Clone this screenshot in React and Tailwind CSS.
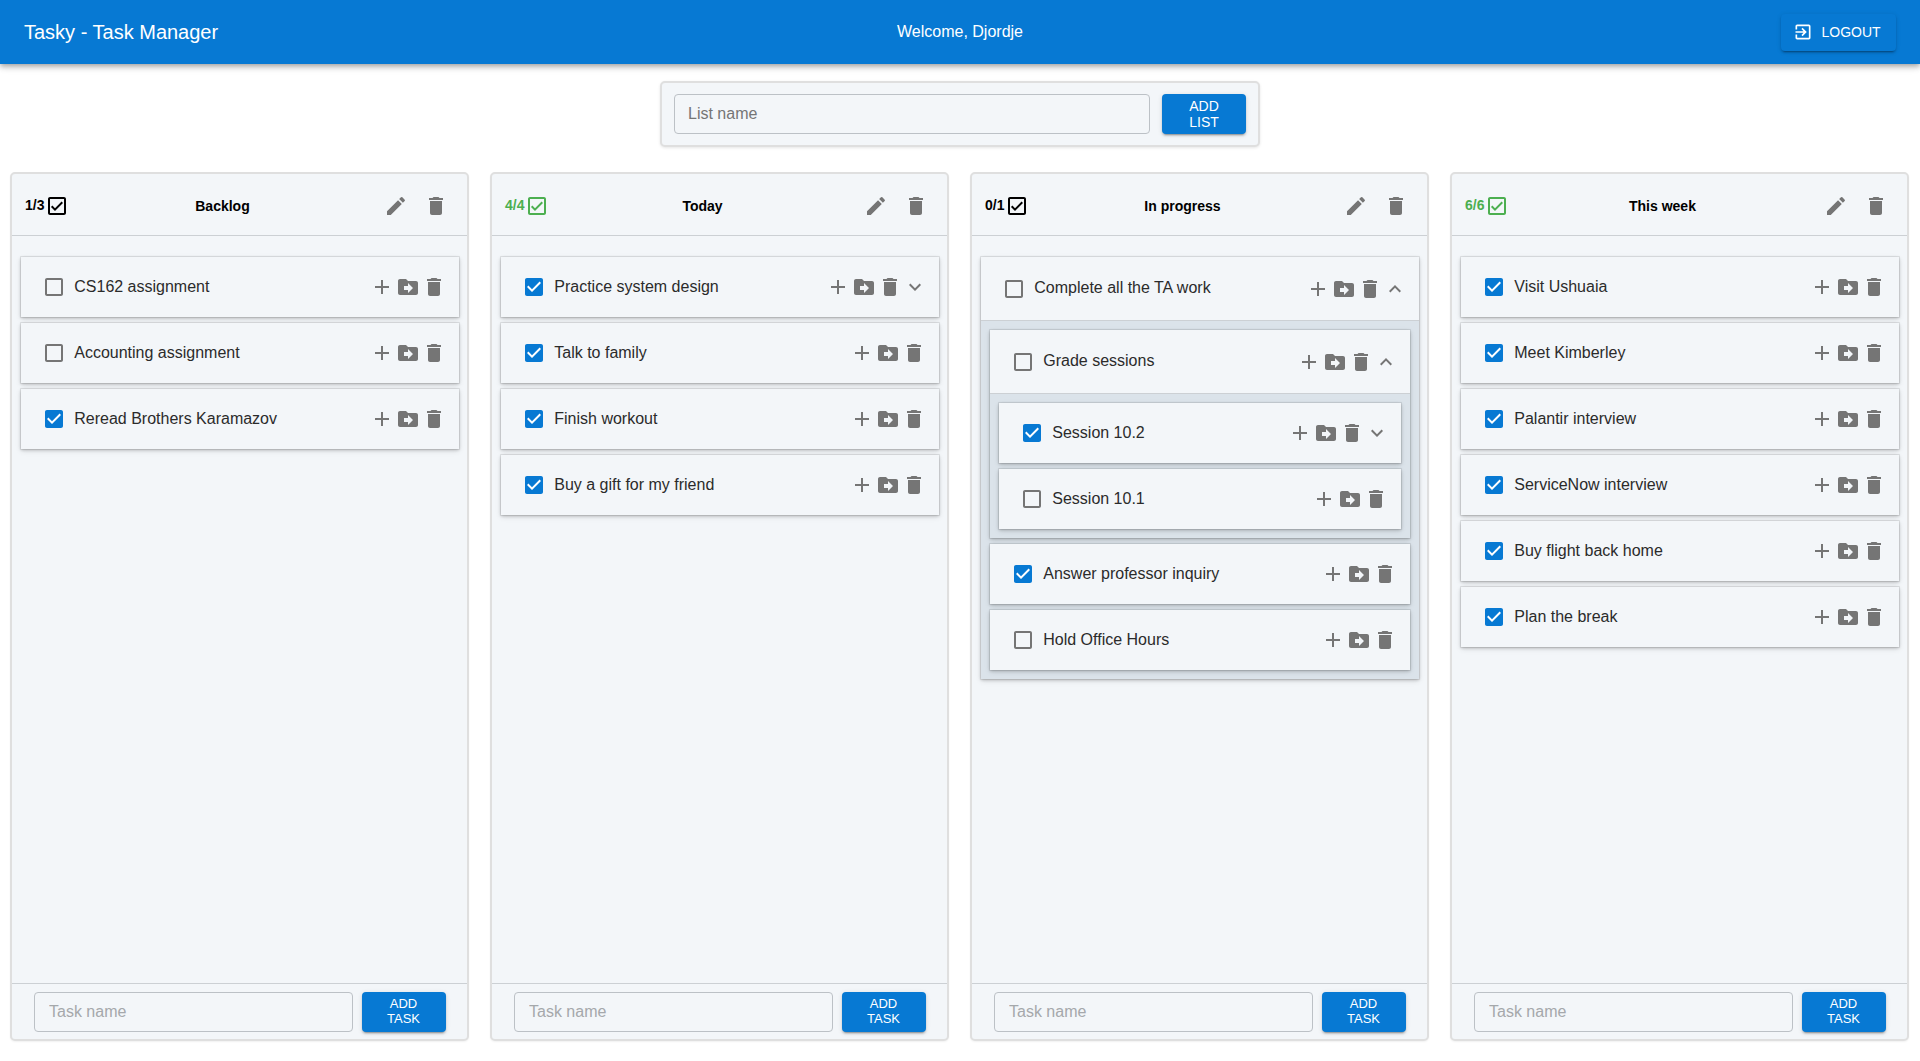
import React from "react";

const PATHS = {
  edit: "M3 17.25V21h3.75L17.81 9.94l-3.75-3.75L3 17.25zM20.71 7.04c.39-.39.39-1.02 0-1.41l-2.34-2.34a.9959.9959 0 0 0-1.41 0l-1.83 1.83 3.75 3.75 1.83-1.83z",
  trash: "M6 19c0 1.1.9 2 2 2h8c1.1 0 2-.9 2-2V7H6v12zM19 4h-3.5l-1-1h-5l-1 1H5v2h14V4z",
  add: "M19 13h-6v6h-2v-6H5v-2h6V5h2v6h6v2z",
  move: "M20 6h-8l-2-2H4c-1.1 0-1.99.9-1.99 2L2 18c0 1.1.9 2 2 2h16c1.1 0 2-.9 2-2V8c0-1.1-.9-2-2-2zm-8 12v-3H8v-4h4V8l5 5-5 5z",
  down: "M16.59 8.59 12 13.17 7.41 8.59 6 10l6 6 6-6z",
  up: "m12 8-6 6 1.41 1.41L12 10.83l4.59 4.58L18 14z",
  blank: "M19 5v14H5V5h14m0-2H5c-1.1 0-2 .9-2 2v14c0 1.1.9 2 2 2h14c1.1 0 2-.9 2-2V5c0-1.1-.9-2-2-2z",
  checked: "M19 3H5c-1.11 0-2 .9-2 2v14c0 1.1.89 2 2 2h14c1.11 0 2-.9 2-2V5c0-1.1-.89-2-2-2zm-9 14-5-5 1.41-1.41L10 14.17l7.59-7.59L19 8l-9 9z",
  outlined: "M19 3H5c-1.1 0-2 .9-2 2v14c0 1.1.9 2 2 2h14c1.1 0 2-.9 2-2V5c0-1.1-.9-2-2-2zm0 16H5V5h14v14zM17.99 9l-1.41-1.42-6.59 6.59-2.58-2.57-1.42 1.41 4 3.99z",
  logout: "M10.09 15.59 11.5 17l5-5-5-5-1.41 1.41L12.67 11H3v2h9.67l-2.58 2.59zM19 3H5c-1.11 0-2 .9-2 2v4h2V5h14v14H5v-4H3v4c0 1.1.89 2 2 2h14c1.1 0 2-.9 2-2V5c0-1.1-.9-2-2-2z",
};

const Icon = ({ name, className = "w-6 h-6 text-[#757575]" }) => (
  <svg viewBox="0 0 24 24" fill="currentColor" className={`shrink-0 ${className}`}>
    <path d={PATHS[name]} />
  </svg>
);

const LISTS = [
  {
    title: "Backlog",
    count: "1/3",
    tasks: [
      { name: "CS162 assignment" },
      { name: "Accounting assignment" },
      { name: "Reread Brothers Karamazov", done: true },
    ],
  },
  {
    title: "Today",
    count: "4/4",
    complete: true,
    tasks: [
      { name: "Practice system design", done: true, chevron: "down" },
      { name: "Talk to family", done: true },
      { name: "Finish workout", done: true },
      { name: "Buy a gift for my friend", done: true },
    ],
  },
  {
    title: "In progress",
    count: "0/1",
    tasks: [
      {
        name: "Complete all the TA work",
        chevron: "up",
        children: [
          {
            name: "Grade sessions",
            chevron: "up",
            children: [
              { name: "Session 10.2", done: true, chevron: "down" },
              { name: "Session 10.1" },
            ],
          },
          { name: "Answer professor inquiry", done: true },
          { name: "Hold Office Hours" },
        ],
      },
    ],
  },
  {
    title: "This week",
    count: "6/6",
    complete: true,
    tasks: [
      { name: "Visit Ushuaia", done: true },
      { name: "Meet Kimberley", done: true },
      { name: "Palantir interview", done: true },
      { name: "ServiceNow interview", done: true },
      { name: "Buy flight back home", done: true },
      { name: "Plan the break", done: true },
    ],
  },
];

const Task = ({ task }) => {
  const open = !!task.children;
  return (
    <div className="bg-[#f3f6f9] shadow-[0_0_0_1px_rgba(0,0,0,0.07),0_1px_3px_rgba(0,0,0,0.22),0_2px_6px_rgba(0,0,0,0.1)]">
      <div className={`flex items-center pl-[21px] pr-[13px] ${open ? "h-[64px] border-b border-[#ccd0d4]" : "h-[60px]"}`}>
        {task.done ? (
          <span className="relative w-6 h-6 shrink-0">
            <span className="absolute left-[6px] top-[6px] w-3 h-3 bg-white" />
            <Icon name="checked" className="relative w-6 h-6 text-[#0779d3]" />
          </span>
        ) : (
          <Icon name="blank" />
        )}
        <span className="ml-[8.5px] flex-1 text-[16px] text-[#2b2b2b] mb-px">
          {task.name}
        </span>
        <div className="flex items-center gap-[2px]">
          <Icon name="add" />
          <Icon name="move" />
          <Icon name="trash" />
        </div>
        {task.chevron && (
          <span className="ml-px -mr-px">
            <Icon name={task.chevron} />
          </span>
        )}
      </div>
      {open && (
        <div className="flex flex-col gap-[6px] p-[9px] bg-[#dbe3ea]">
          {task.children.map((child) => (
            <Task key={child.name} task={child} />
          ))}
        </div>
      )}
    </div>
  );
};

const AddButton = ({ top, bottom, className }) => (
  <button className={`w-[84px] h-10 shrink-0 flex flex-col items-center justify-center bg-[#0779d3] text-white rounded-[4px] shadow-[0_3px_1px_-2px_rgba(0,0,0,0.2),0_2px_2px_0_rgba(0,0,0,0.14),0_1px_5px_0_rgba(0,0,0,0.12)] ${className}`}>
    <span>{top}</span>
    <span>{bottom}</span>
  </button>
);

const List = ({ list }) => (
  <div className="flex flex-col min-w-0 bg-[#f3f6f9] border-2 border-[#dfdfdf] rounded-[5px] shadow-[0_1px_2px_rgba(0,0,0,0.06)]">
    <div className="h-[61.5px] pt-[3px] flex items-center pl-[13px] pr-[11.5px] border-b border-[#ccd0d4]">
      <div className={`flex items-center text-[14px] font-bold ${list.complete ? "text-[#4caf50]" : "text-black"}`}>
        <span className="mr-px">{list.count}</span>
        <Icon name="outlined" className={`w-6 h-6 ${list.complete ? "text-[#4caf50]" : "text-black"}`} />
      </div>
      <div className="flex-1 pt-px text-center text-[14px] font-bold text-black">{list.title}</div>
      <div className="flex items-center">
        <span className="w-10 h-10 flex items-center justify-center"><Icon name="edit" /></span>
        <span className="w-10 h-10 flex items-center justify-center"><Icon name="trash" /></span>
      </div>
    </div>
    <div className="flex-1 flex flex-col gap-[6px] pl-[8.75px] pr-[8.5px] pt-[21.5px]">
      {list.tasks.map((task) => (
        <Task key={task.name} task={task} />
      ))}
    </div>
    <div className="h-[56.5px] flex items-start gap-[9px] pl-[22px] pr-[21.5px] pt-2 border-t border-[#ccd0d4]">
      <input
        placeholder="Task name"
        className="flex-1 min-w-0 h-10 px-[14px] text-[16px] bg-transparent border border-[#bcc1c6] rounded-[4px] outline-none placeholder:text-[#a5a8ab]"
      />
      <AddButton top="ADD" bottom="TASK" className="text-[13px] leading-[14.6px]" />
    </div>
  </div>
);

export default function App() {
  return (
    <div className="h-screen flex flex-col bg-white font-['Liberation_Sans',Arial,sans-serif] overflow-hidden">
      <header className="relative z-10 h-16 shrink-0 flex items-center justify-between pl-6 pr-6 bg-[#0779d3] text-white shadow-[0_2px_4px_-1px_rgba(0,0,0,0.2),0_4px_5px_0_rgba(0,0,0,0.14),0_1px_10px_0_rgba(0,0,0,0.12)]">
        <div className="w-[300px] text-[20px]">Tasky - Task Manager</div>
        <div className="text-[16px]">Welcome, Djordje</div>
        <div className="w-[300px] flex justify-end">
          <button className="w-[115px] h-[37px] flex items-center justify-start gap-[8.5px] pl-3 rounded-[4px] text-[14px] bg-[#0779d3] shadow-[0_3px_1px_-2px_rgba(0,0,0,0.2),0_2px_2px_0_rgba(0,0,0,0.14),0_1px_5px_0_rgba(0,0,0,0.12)]">
            <Icon name="logout" className="w-5 h-5 text-white" />
            LOGOUT
          </button>
        </div>
      </header>

      <div className="mt-[17px] shrink-0 self-center w-[600px] h-[66px] flex items-center gap-3 px-3 bg-[#f3f6f9] border-2 border-[#dfdfdf] rounded-[5px] shadow-[0_1px_3px_rgba(0,0,0,0.1)]">
        <input
          placeholder="List name"
          className="flex-1 min-w-0 h-10 px-[13px] text-[16px] bg-transparent border border-[#bcc1c6] rounded-[4px] outline-none placeholder:text-[#757575]"
        />
        <AddButton top="ADD" bottom="LIST" className="text-[14px] leading-[16px]" />
      </div>

      <div className="flex-1 min-h-0 grid grid-cols-4 gap-[21px] pl-[10px] pr-[11px] pt-[25px] pb-5">
        {LISTS.map((list) => (
          <List key={list.title} list={list} />
        ))}
      </div>
    </div>
  );
}
